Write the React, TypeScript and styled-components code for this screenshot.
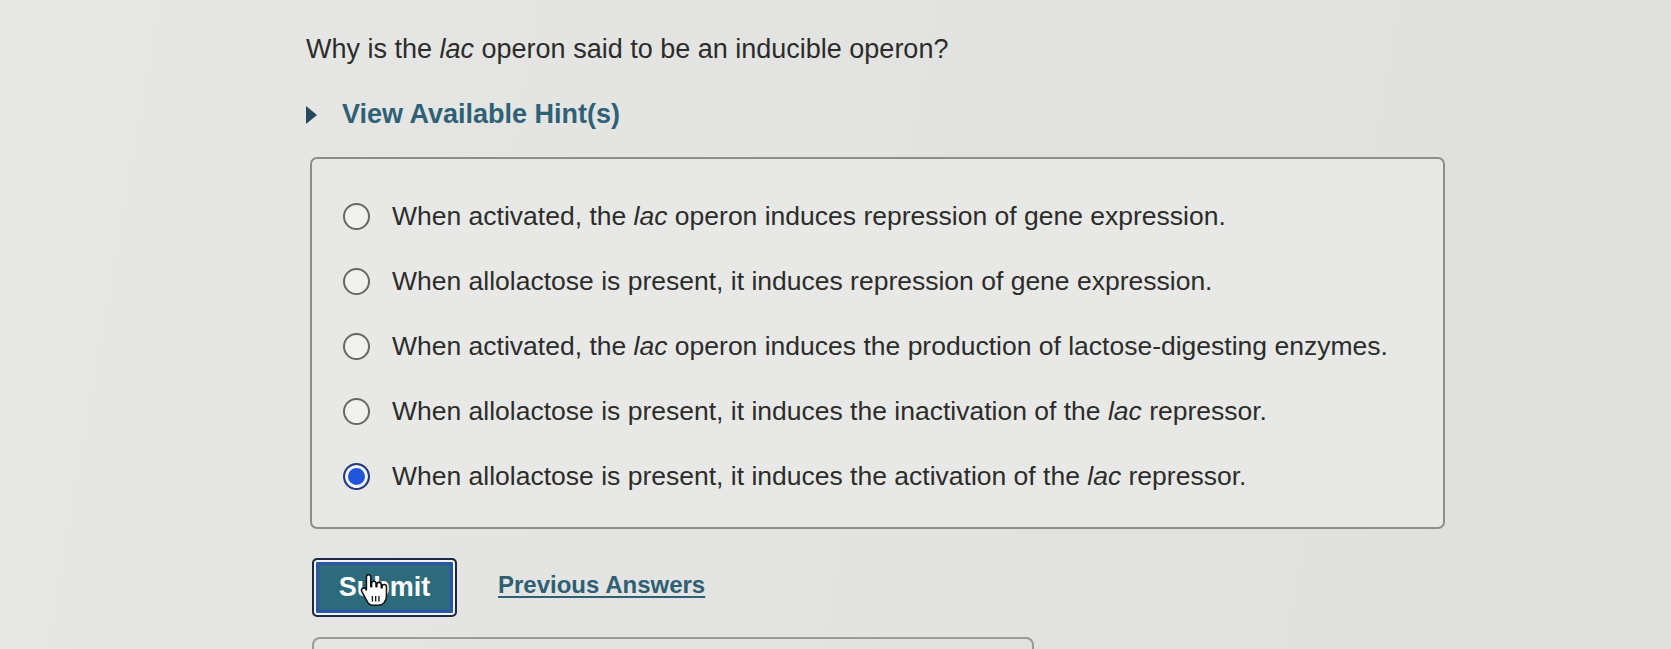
import * as React from 'react'
import styled, { createGlobalStyle } from 'styled-components'

const GlobalStyle = createGlobalStyle`
  html, body {
    margin: 0;
    padding: 0;
    background: #e3e4e1;
  }
  body {
    font-family: 'Liberation Sans', Arial, Helvetica, sans-serif;
    color: #303030;
  }
`

const Page = styled.div`
  width: 1671px;
  height: 649px;
  overflow: hidden;
  box-sizing: border-box;
  padding: 34px 0 0 306px;
  background: linear-gradient(100deg, #e7e8e5 0%, #e3e4e1 45%, #dfe0dd 100%);
`

const Question = styled.p`
  margin: 0;
  font-size: 27px;
  line-height: 31px;
  color: #2c2c2c;
`

const HintToggle = styled.div`
  display: flex;
  align-items: center;
  gap: 25px;
  margin-top: 34px;
  font-size: 27px;
  line-height: 31px;
  font-weight: bold;
  color: #2e6176;
`

const Triangle = styled.span`
  width: 0;
  height: 0;
  border-top: 9px solid transparent;
  border-bottom: 9px solid transparent;
  border-left: 11px solid #24495c;
`

const Choices = styled.div`
  box-sizing: border-box;
  width: 1135px;
  margin: 27px 0 0 4px;
  padding: 25px 0 18px 31px;
  border: 2px solid #8d8e8b;
  border-radius: 7px;
  background: #e8e9e6;
`

const Choice = styled.label`
  display: flex;
  align-items: center;
  gap: 22px;
  height: 65px;
  font-size: 26.5px;
  color: #2c2c2c;
`

const Radio = styled.span<{ $checked?: boolean }>`
  box-sizing: border-box;
  flex: none;
  width: 27px;
  height: 27px;
  border-radius: 50%;
  border: 2px solid ${p => (p.$checked ? '#27387c' : '#676866')};
  background: ${p => (p.$checked ? '#1f55d9' : '#f1f1ef')};
  box-shadow: ${p => (p.$checked ? 'inset 0 0 0 3px #f4f4f2' : 'none')};
`

const Actions = styled.div`
  display: flex;
  align-items: center;
  margin: 29px 0 0 6px;
`

const SubmitButton = styled.button`
  position: relative;
  box-sizing: border-box;
  width: 145px;
  height: 59px;
  padding: 0;
  border: 2px solid #1e2844;
  border-radius: 5px;
  background: #2d6a7c;
  box-shadow: inset 0 0 0 2px #f2f3f5, inset 0 0 0 5px #2b56a8;
  color: #fff;
  font-family: inherit;
  font-size: 27px;
  font-weight: bold;
`

const Cursor = styled.svg`
  position: absolute;
  left: 44px;
  top: 12px;
  width: 31px;
  height: 36px;
`

const PrevLink = styled.a`
  margin: 0 0 6px 41px;
  font-size: 24px;
  font-weight: bold;
  color: #2e5f74;
  text-decoration: underline;
  text-underline-offset: 3px;
  text-decoration-thickness: 2px;
`

const NextPanel = styled.div`
  box-sizing: border-box;
  width: 722px;
  height: 40px;
  margin: 20px 0 0 6px;
  border: 2px solid #9a9b98;
  border-bottom: none;
  border-radius: 8px 8px 0 0;
`

const options: { text: React.ReactNode; checked?: boolean }[] = [
  { text: <>When activated, the <i>lac</i> operon induces repression of gene expression.</> },
  { text: <>When allolactose is present, it induces repression of gene expression.</> },
  { text: <>When activated, the <i>lac</i> operon induces the production of lactose-digesting enzymes.</> },
  { text: <>When allolactose is present, it induces the inactivation of the <i>lac</i> repressor.</> },
  { text: <>When allolactose is present, it induces the activation of the <i>lac</i> repressor.</>, checked: true },
]

const HandCursor = () => (
  <Cursor viewBox="0 0 27 33">
    <path
      d="M9 2.5c1.2 0 2 .9 2 2v9h.8v-3c0-1.1.9-2 2-2s2 .9 2 2v3h.8v-2c0-1.1.9-2 2-2s2 .9 2 2v3h.8v-1c0-1.1.9-2 2-2s2 .9 2 2v8.5c0 4.5-3 8.5-7.5 8.5h-5c-2.2 0-3.6-1-4.7-2.6L2.8 18c-.7-1-.4-2.3.6-3 .9-.6 2.1-.4 2.8.4L7 16.5v-12c0-1.1.8-2 2-2z"
      fill="#fff"
      stroke="#111"
      strokeWidth="1.4"
      strokeLinejoin="round"
    />
    <path d="M12.5 22v5M15.5 22v5M18.5 22v5" stroke="#111" strokeWidth="1.2" />
  </Cursor>
)

const App = () => (
  <>
    <GlobalStyle />
    <Page>
      <Question>
        Why is the <i>lac</i> operon said to be an inducible operon?
      </Question>
      <HintToggle>
        <Triangle />
        View Available Hint(s)
      </HintToggle>
      <Choices>
        {options.map((o, i) => (
          <Choice key={i}>
            <Radio $checked={o.checked} />
            <span>{o.text}</span>
          </Choice>
        ))}
      </Choices>
      <Actions>
        <SubmitButton>
          Submit
          <HandCursor />
        </SubmitButton>
        <PrevLink href="#">Previous Answers</PrevLink>
      </Actions>
      <NextPanel />
    </Page>
  </>
)

export default App
